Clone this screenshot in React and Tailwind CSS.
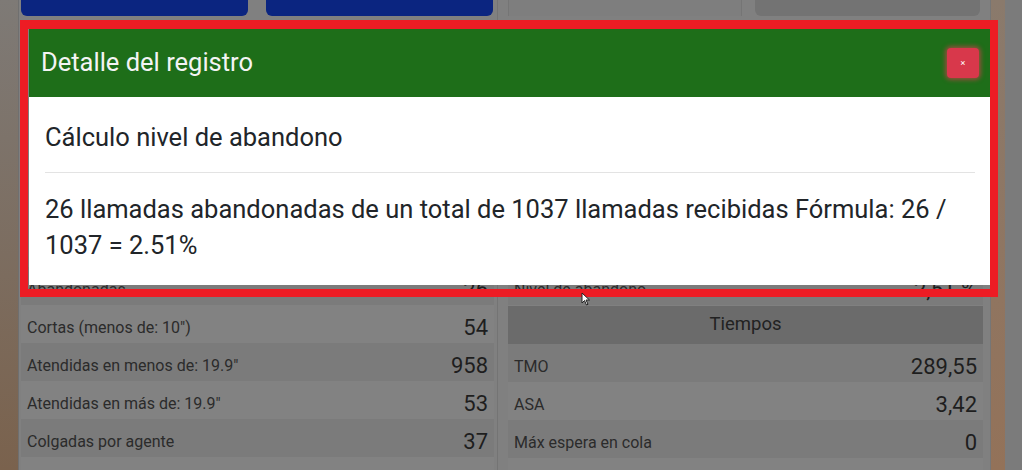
import React from 'react'

const LEFT_ROWS = [
  { label: 'Abandonadas', value: '26' },
  { label: 'Cortas (menos de: 10")', value: '54' },
  { label: 'Atendidas en menos de: 19.9"', value: '958' },
  { label: 'Atendidas en más de: 19.9"', value: '53' },
  { label: 'Colgadas por agente', value: '37' },
  { label: 'Colgadas por cliente', value: '12' },
]

const RIGHT_TIMES = [
  { label: 'TMO', value: '289,55' },
  { label: 'ASA', value: '3,42' },
  { label: 'Máx espera en cola', value: '0' },
  { label: 'Mín espera en cola', value: '0' },
]

function Row({ label, value, dark }) {
  return (
    <div
      className={`h-[38px] shrink-0 flex items-center justify-between px-[6px] pt-[7px] ${dark ? 'bg-[#7b7b7b]' : 'bg-[#828282]'}`}
    >
      <span className="text-[16px] text-[#2b2b2b]">{label}</span>
      <span className="text-[22px] text-[#1e1e1e]">{value}</span>
    </div>
  )
}

function Background() {
  return (
    <div className="flex h-full">
      <div className="w-[19px] shrink-0 bg-gradient-to-b from-[#7e7a76] to-[#7a624d] border-r border-[#6f6f6f]" />
      <div className="w-[971px] shrink-0 bg-[#808080] flex">
        {/* left column */}
        <div className="w-[479px] shrink-0 pl-[2px] pr-[3px] border-r border-[#747474] flex flex-col">
          <div className="flex gap-[18px] h-[16px] shrink-0">
            <div className="w-[227px] bg-[#0b2580] rounded-b-[6px]" />
            <div className="w-[227px] bg-[#0b2580] rounded-b-[6px]" />
          </div>
          <div className="h-[251px] shrink-0" />
          {LEFT_ROWS.map((r, i) => (
            <Row key={r.label} {...r} dark={i % 2 === 0} />
          ))}
        </div>
        {/* right column */}
        <div className="flex-1 pl-[10px] pr-[7px] flex flex-col">
          <div className="flex gap-[13px] h-[16px] shrink-0">
            <div className="w-[234px] bg-[#7e7e7e] border-x border-[#757575]" />
            <div className="w-[225px] bg-[#737373] rounded-b-[6px]" />
          </div>
          <div className="h-[251px] shrink-0" />
          <Row label="Nivel de abandono" value="2,51 %" dark />
          <div className="h-[38px] shrink-0 flex items-center justify-center bg-[#6b6b6b] mt-px">
            <span className="text-[18.5px] text-[#222]">Tiempos</span>
          </div>
          {RIGHT_TIMES.map((r, i) => (
            <Row key={r.label} {...r} dark={i % 2 === 0} />
          ))}
        </div>
      </div>
      <div className="w-[15px] shrink-0 bg-gradient-to-b from-[#8a7a6c] to-[#937259] border-l border-[#767676]" />
      <div className="flex-1 bg-[#7b7b7b]" />
    </div>
  )
}

export default function App() {
  return (
    <div className="relative w-[1022px] h-[470px] overflow-hidden font-['Roboto',sans-serif]">
      <Background />

      {/* modal */}
      <div className="absolute left-[29px] top-[29px] w-[962px] bg-white flex flex-col">
        <div className="h-[68px] bg-[#1e6e19] flex items-center justify-between pl-[12px] pr-[12px]">
          <h2 className="text-[25.5px] text-[#f4f4f4] leading-none">Detalle del registro</h2>
          <button className="w-[32px] h-[30px] rounded-[4px] bg-[#d8384b] shadow-[0_0_4px_2px_rgba(220,60,80,0.6)] flex items-center justify-center text-[9px] leading-none text-white">
            ×
          </button>
        </div>
        <div className="px-4 pt-[22px] pb-[22px] text-[#212529]">
          <h3 className="text-[25.5px] leading-[36px]">Cálculo nivel de abandono</h3>
          <hr className="mt-[17px] mb-[18px] border-t border-[#e3e3e3]" />
          <p className="text-[25.5px] leading-[36px]">
            26 llamadas abandonadas de un total de 1037 llamadas recibidas Fórmula: 26 / 1037 = 2.51%
          </p>
        </div>
      </div>

      {/* highlight frame */}
      <div className="absolute left-[20px] top-[20px] w-[978px] h-[277px] border-[8px] border-t-[9px] border-[#ed1c24] pointer-events-none" />

      {/* cursor */}
      <svg className="absolute left-[581px] top-[292px]" width="12" height="14" viewBox="0 0 12 14">
        <path d="M1 1 L1 11 L3.5 8.5 L5.5 13 L7 12.3 L5 8 L8.5 8 Z" fill="#fff" stroke="#222" strokeWidth="1" />
      </svg>
    </div>
  )
}
